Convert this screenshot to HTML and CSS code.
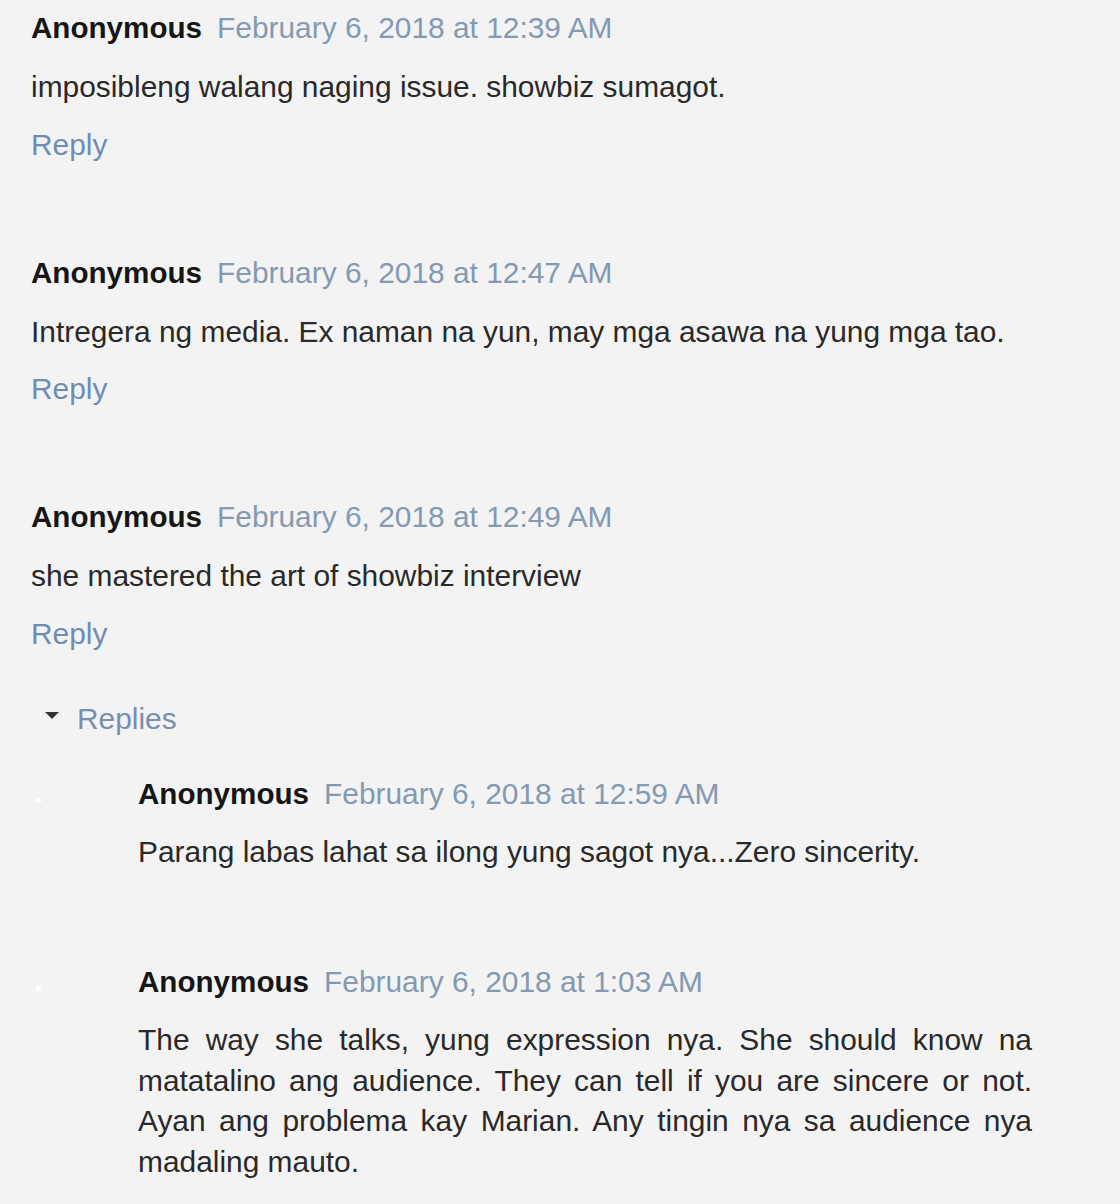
FILE: index.html
```html
<!DOCTYPE html>
<html lang="tl">
<head>
<meta charset="utf-8">
<title>Comments</title>
<link rel="stylesheet" href="styles.css">
</head>
<body>
<div class="comments">
  <div class="comment">
    <div class="comment-header"><span class="author">Anonymous</span><a class="date" href="#">February 6, 2018 at 12:39 AM</a></div>
    <p class="comment-body">imposibleng walang naging issue. showbiz sumagot.</p>
    <a class="reply" href="#">Reply</a>
  </div>
  <div class="comment">
    <div class="comment-header"><span class="author">Anonymous</span><a class="date" href="#">February 6, 2018 at 12:47 AM</a></div>
    <p class="comment-body">Intregera ng media. Ex naman na yun, may mga asawa na yung mga tao.</p>
    <a class="reply" href="#">Reply</a>
  </div>
  <div class="comment">
    <div class="comment-header"><span class="author">Anonymous</span><a class="date" href="#">February 6, 2018 at 12:49 AM</a></div>
    <p class="comment-body">she mastered the art of showbiz interview</p>
    <a class="reply" href="#">Reply</a>
    <div class="thread">
      <div class="thread-toggle"><span class="arrow"></span><a class="toggle-label" href="#">Replies</a></div>
      <div class="thread-list">
        <div class="nested">
          <div class="avatar-col"><span class="avatar-dot"></span></div>
          <div class="nested-main">
            <div class="comment-header"><span class="author">Anonymous</span><a class="date" href="#">February 6, 2018 at 12:59 AM</a></div>
            <p class="comment-body">Parang labas lahat sa ilong yung sagot nya...Zero sincerity.</p>
          </div>
        </div>
        <div class="nested">
          <div class="avatar-col"><span class="avatar-dot"></span></div>
          <div class="nested-main">
            <div class="comment-header"><span class="author">Anonymous</span><a class="date" href="#">February 6, 2018 at 1:03 AM</a></div>
            <p class="comment-body justify">The way she talks, yung expression nya. She should know na matatalino ang audience. They can tell if you are sincere or not. Ayan ang problema kay Marian. Any tingin nya sa audience nya madaling mauto.</p>
          </div>
        </div>
      </div>
    </div>
  </div>
</div>
</body>
</html>
```

FILE: styles.css
```css
html, body {
  margin: 0;
  padding: 0;
  background: #f3f3f3;
}

body {
  font-family: "Liberation Sans", Arial, sans-serif;
  font-size: 29.9px;
  color: #292929;
}

.comments {
  padding: 8px 0 0 31px;
}

.comment + .comment {
  margin-top: 88px;
}

.comment-header {
  display: flex;
  align-items: baseline;
  gap: 15px;
  line-height: 40px;
  height: 40px;
  white-space: nowrap;
}

.author {
  font-weight: bold;
  font-size: 29.6px;
  color: #161616;
}

.date {
  color: #8499b2;
  text-decoration: none;
}

.comment-body {
  margin: 19px 0 0 0;
  line-height: 40.5px;
}

.reply {
  display: block;
  margin-top: 17px;
  line-height: 40px;
  color: #6f8db4;
  text-decoration: none;
  width: max-content;
}

.thread {
  margin-top: 45px;
}

.thread-toggle {
  display: flex;
  align-items: center;
  line-height: 40px;
  height: 40px;
}

.arrow {
  width: 0;
  height: 0;
  margin-left: 14px;
  margin-right: 18px;
  margin-top: -6px;
  border-left: 7px solid transparent;
  border-right: 7px solid transparent;
  border-top: 7px solid #333;
}

.toggle-label {
  color: #7890ad;
  text-decoration: none;
}

.thread-list {
  margin-top: 35px;
}

.nested {
  display: flex;
}

.nested + .nested {
  margin-top: 90px;
}

.avatar-col {
  width: 107px;
  flex: none;
  position: relative;
}

.avatar-dot {
  position: absolute;
  left: 5px;
  top: 24px;
  width: 5px;
  height: 5px;
  background: #ffffff;
  border-radius: 1px;
}

.nested-main {
  width: 894px;
}

.nested-main .comment-body {
  margin-top: 18px;
}

.justify {
  text-align: justify;
}
```
